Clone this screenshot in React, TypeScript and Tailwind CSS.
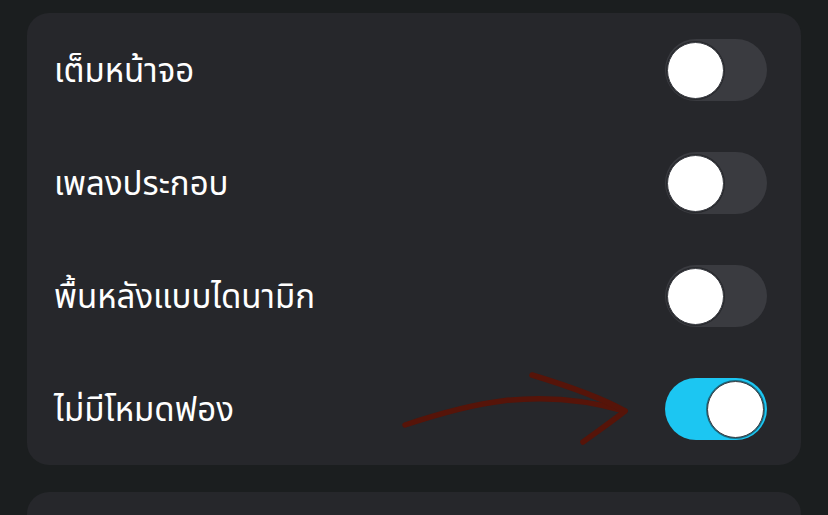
import React, { useState } from 'react';

type Setting = { id: string; label: string; on: boolean };

const initialSettings: Setting[] = [
  { id: 'fullscreen', label: 'เต็มหน้าจอ', on: false },
  { id: 'music', label: 'เพลงประกอบ', on: false },
  { id: 'dynamicBg', label: 'พื้นหลังแบบไดนามิก', on: false },
  { id: 'noBubble', label: 'ไม่มีโหมดฟอง', on: true },
];

const Toggle: React.FC<{ on: boolean; onChange: () => void }> = ({ on, onChange }) => (
  <button
    onClick={onChange}
    className={`relative w-[102px] h-[62px] rounded-full transition-colors ${on ? 'bg-[#1cc6f2]' : 'bg-[#3a3b40]'}`}
  >
    <span
      className={`absolute top-[3px] w-[57px] h-[57px] rounded-full bg-white border border-[#3a3c42] shadow-[0_0_0_1px_rgba(20,21,24,0.5)] transition-all ${
        on ? 'left-[42px]' : 'left-[2px]'
      }`}
    />
  </button>
);

// hand-drawn pointer over the last row
const Arrow = () => (
  <svg className="absolute left-[395px] top-[365px] pointer-events-none" width="245" height="90" viewBox="0 0 245 90">
    <path d="M10 60 C 70 40, 140 20, 230 46" stroke="#561409" strokeWidth="5.5" fill="none" strokeLinecap="round" />
    <path d="M137 10 C 170 20, 205 32, 230 46 C 215 58, 200 68, 188 77" stroke="#561409" strokeWidth="5.5" fill="none" strokeLinecap="round" strokeLinejoin="round" />
  </svg>
);

export default function App() {
  const [settings, setSettings] = useState(initialSettings);

  const flip = (id: string) =>
    setSettings((s) => s.map((x) => (x.id === id ? { ...x, on: !x.on } : x)));

  return (
    <div
      className="relative w-[828px] h-[515px] overflow-hidden bg-[#1b1e1f] px-[27px] pt-[13px] flex flex-col gap-[27px]"
      style={{ fontFamily: '"Noto Sans Thai", "Noto Sans", "DejaVu Sans", sans-serif' }}
    >
      <div className="bg-[#26272b] rounded-[22px] flex flex-col shrink-0">
        {settings.map((s) => (
          <div key={s.id} className="h-[113px] flex items-center justify-between pl-[27px] pr-[34px]">
            <span className="text-white text-[33px] leading-none pt-[6px]">{s.label}</span>
            <Toggle on={s.on} onChange={() => flip(s.id)} />
          </div>
        ))}
      </div>
      <div className="bg-[#26272b] rounded-[22px] h-[120px] shrink-0" />
      <Arrow />
    </div>
  );
}
